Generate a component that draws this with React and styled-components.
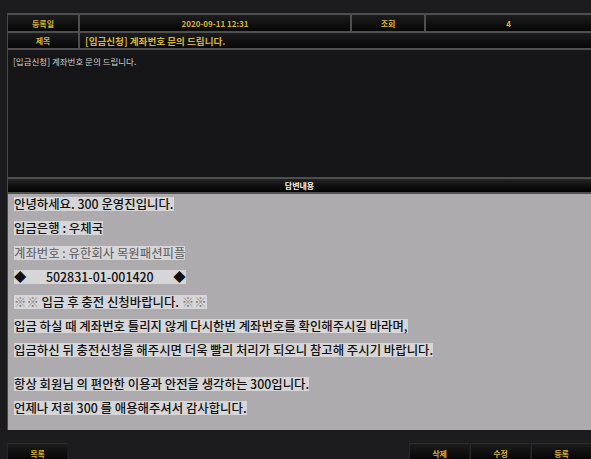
import styled, { createGlobalStyle } from "styled-components";

const Global = createGlobalStyle`
	html, body {
		margin: 0;
		padding: 0;
		background: #1c1b1d;
		overflow: hidden;
	}
	body {
		font-family: "Noto Sans CJK KR", "Noto Sans", sans-serif;
	}
`;

const Page = styled.div`
	width: 591px;
	height: 459px;
	padding: 13px 0 0 7px;
	box-sizing: border-box;
	display: flex;
	flex-direction: column;
`;

const Board = styled.section`
	border-left: 1px solid #4a4a4a;
	display: flex;
	flex-direction: column;
`;

const Row = styled.div`
	display: grid;
	grid-template-columns: ${(p) => p.$cols};
	height: ${(p) => p.$h}px;
	border-top: 2px solid #4e4e4e;
	box-sizing: border-box;
`;

const Cell = styled.div`
	display: flex;
	align-items: center;
	justify-content: ${(p) => (p.$left ? "flex-start" : "center")};
	padding: ${(p) => (p.$left ? "0 5px" : "0")};
	border-right: ${(p) => (p.$last ? "none" : "2px solid #4e4e4e")};
	background: linear-gradient(#1d1d1f, #060607);
	color: #d9b430;
	font-size: ${(p) => (p.$left ? 9.6 : 8)}px;
	font-weight: 700;
	white-space: nowrap;
	overflow: hidden;
`;

const Question = styled.div`
	height: 129px;
	border-top: 2px solid #4e4e4e;
	background: #161518;
	color: #cfcfcf;
	font-size: 8.5px;
	padding: 5px 5px;
	box-sizing: border-box;
`;

const AnswerHead = styled.div`
	height: 17px;
	border-top: 2px solid #4e4e4e;
	border-bottom: 2px solid #4e4e4e;
	box-sizing: border-box;
	background: linear-gradient(#232325, #000);
	color: #f2f2f2;
	font-size: 8px;
	font-weight: 700;
	display: flex;
	align-items: center;
	justify-content: center;
`;

const Answer = styled.div`
	height: 236px;
	background: #adabae;
	padding: 3px 6px 0;
	box-sizing: border-box;
	display: flex;
	flex-direction: column;
	align-items: flex-start;
	gap: 10.4px;
`;

const Line = styled.span`
	display: inline-block;
	line-height: 14px;
	height: 14px;
	background: #d6d5d7;
	color: ${(p) => (p.$muted ? "#5a5a5a" : "#111")};
	font-size: 12.4px;
	font-weight: ${(p) => (p.$muted ? 400 : 500)};
	white-space: pre;
	margin-top: ${(p) => p.$gap || 0}px;
`;

const Mark = styled.span`
	color: #7a7a7a;
	font-weight: 400;
`;

const Buttons = styled.div`
	margin-top: 13px;
	display: flex;
	gap: 1px;
`;

const Button = styled.button`
	width: 60px;
	height: 20px;
	border: none;
	border-top: 1px solid #2c2c2c;
	border-left: 1px solid #262626;
	background: linear-gradient(#1c1c1c, #000);
	color: #d9b430;
	font-family: inherit;
	font-size: 8px;
	font-weight: 700;
	padding: 0;
	cursor: pointer;
`;

const Spacer = styled.div`
	flex: 1;
`;

export default function App() {
	return (
		<>
			<Global />
			<Page>
				<Board>
					<Row $cols="72px 272px 74px 1fr" $h={18}>
						<Cell>등록일</Cell>
						<Cell>2020-09-11 12:31</Cell>
						<Cell>조회</Cell>
						<Cell $last>4</Cell>
					</Row>
					<Row $cols="72px 1fr" $h={17}>
						<Cell>제목</Cell>
						<Cell $left $last>
							[입금신청] 계좌번호 문의 드립니다.
						</Cell>
					</Row>
					<Question>[입금신청] 계좌번호 문의 드립니다.</Question>
					<AnswerHead>답변내용</AnswerHead>
					<Answer>
						<Line>안녕하세요. 300 운영진입니다.</Line>
						<Line>입금은행 : 우체국</Line>
						<Line $muted>계좌번호 : 유한회사 목원패션피플</Line>
						<Line>{"◆       502831-01-001420       ◆"}</Line>
						<Line>
							<Mark>※※</Mark> 입금 후 충전 신청바랍니다. <Mark>※※</Mark>
						</Line>
						<Line>입금 하실 때 계좌번호 틀리지 않게 다시한번 계좌번호를 확인해주시길 바라며,</Line>
						<Line>입금하신 뒤 충전신청을 해주시면 더욱 빨리 처리가 되오니 참고해 주시기 바랍니다.</Line>
						<Line $gap={9}>항상 회원님 의 편안한 이용과 안전을 생각하는 300입니다.</Line>
						<Line>언제나 저희 300 를 애용해주셔서 감사합니다.</Line>
					</Answer>
				</Board>
				<Buttons>
					<Button>목록</Button>
					<Spacer />
					<Button>삭제</Button>
					<Button>수정</Button>
					<Button>등록</Button>
				</Buttons>
			</Page>
		</>
	);
}
